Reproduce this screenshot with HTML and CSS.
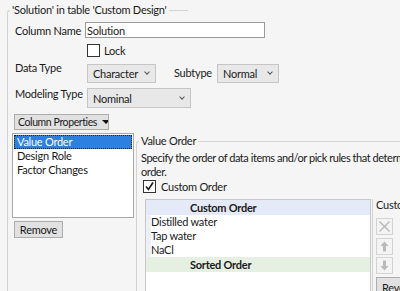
FILE: index.html
```html
<!DOCTYPE html>
<html lang="en">
<head>
    <title>Column Info</title>
    <link rel="stylesheet" href="styles.css">
</head>
<body>
    <fieldset class="group">
        <legend>'Solution' in table 'Custom Design'</legend>
        <div class="row name-row">
            <span class="label">Column Name</span>
            <input class="text-input" type="text" value="Solution">
        </div>
        <div class="row lock-row">
            <span class="check"></span>
            <span>Lock</span>
        </div>
        <div class="row type-row">
            <span class="label">Data Type</span>
            <div class="combo combo-char">Character<span class="chev"></span></div>
            <span class="sub-label">Subtype</span>
            <div class="combo combo-normal">Normal<span class="chev"></span></div>
        </div>
        <div class="row model-row">
            <span class="label">Modeling Type</span>
            <div class="combo combo-nominal">Nominal<span class="chev"></span></div>
        </div>
        <button class="btn props-btn"><span class="props-text">Column Properties</span><span class="tri"></span></button>
        <div class="split">
            <div class="left-panel">
                <ul class="prop-list">
                    <li class="selected">Value Order</li>
                    <li>Design Role</li>
                    <li>Factor Changes</li>
                </ul>
                <button class="btn remove-btn">Remove</button>
            </div>
            <fieldset class="value-group">
                <legend>Value Order</legend>
                <p class="desc">Specify the order of data items and/or pick rules that determine the<br>order.</p>
                <div class="check-row">
                    <span class="check checked">
                        <svg width="11" height="11" viewBox="0 0 11 11"><path d="M2 5.5 L4.5 8.5 L9 1.5" fill="none" stroke="#1a1a1a" stroke-width="1.6"/></svg>
                    </span>
                    <span>Custom Order</span>
                </div>
                <div class="order-area">
                    <div class="order-list">
                        <div class="order-head">Custom Order</div>
                        <div class="order-item">Distilled water</div>
                        <div class="order-item">Tap water</div>
                        <div class="order-item">NaCl</div>
                        <div class="order-head sorted">Sorted Order</div>
                    </div>
                    <div class="order-tools">
                        <div class="tools-label">Custom Order</div>
                        <button class="tool tool-x" disabled>
                            <svg width="13" height="13" viewBox="0 0 13 13"><path d="M1.5 1.5 L11.5 11.5 M11.5 1.5 L1.5 11.5" stroke="#b5b5b5" stroke-width="1.3"/></svg>
                        </button>
                        <button class="tool tool-up" disabled>
                            <svg width="9" height="11" viewBox="0 0 9 11"><path d="M4.5 0.5 L8.5 5 L6 5 L6 10.5 L3 10.5 L3 5 L0.5 5 Z" fill="#b9b9b9"/></svg>
                        </button>
                        <button class="tool tool-down" disabled>
                            <svg width="9" height="11" viewBox="0 0 9 11"><path d="M4.5 10.5 L8.5 6 L6 6 L6 0.5 L3 0.5 L3 6 L0.5 6 Z" fill="#b9b9b9"/></svg>
                        </button>
                        <button class="btn rev-btn">Reverse</button>
                    </div>
                </div>
            </fieldset>
        </div>
    </fieldset>
</body>
</html>
```
FILE: styles.css
```css
body {
    margin: 0;
    background-color: #f5f5f5;
    font-family: Lato, "Liberation Sans", sans-serif;
    font-size: 11px;
    letter-spacing: -0.25px;
    color: #1a1a1a;
    white-space: nowrap;
    overflow: hidden;
}

fieldset {
    border: 1px solid #d3d3d3;
    border-right: none;
    border-bottom: none;
    border-radius: 3px 0 0 0;
}

legend {
    line-height: 16px;
    padding: 0 2px;
}

.group {
    margin: 2px 0 0 7px;
    padding: 4px 0 0 7px;
    width: 173px;
    min-width: 0;
    height: 300px;
}

.group > legend {
    margin-left: -5px;
}

.row {
    display: flex;
    width: 380px;
}

.label {
    width: 70px;
    flex-shrink: 0;
}

.name-row {
    height: 16px;
    align-items: center;
}

.text-input {
    width: 180px;
    height: 16px;
    box-sizing: border-box;
    border: 1px solid #9a9a9a;
    background: #fff;
    font: inherit;
    letter-spacing: inherit;
    padding: 0 1px;
    margin: 0;
    color: #1a1a1a;
}

.lock-row {
    margin-top: 6px;
    padding-left: 72px;
    align-items: center;
    height: 13px;
}

.check {
    width: 13px;
    height: 13px;
    box-sizing: border-box;
    border: 1px solid #333;
    background: #fff;
    margin-right: 4px;
    display: flex;
    align-items: center;
    justify-content: center;
    flex-shrink: 0;
}

.type-row {
    margin-top: 4px;
}

.combo {
    height: 19px;
    box-sizing: border-box;
    border: 1px solid #c6c6c6;
    background: #e8e8e8;
    display: flex;
    align-items: center;
    justify-content: space-between;
    padding: 0 6px 0 5px;
    flex-shrink: 0;
}

.chev {
    width: 3px;
    height: 3px;
    border-right: 1px solid #555;
    border-bottom: 1px solid #555;
    transform: rotate(45deg);
    margin-top: -3px;
}

.type-row .label {
    line-height: 14px;
}

.type-row .combo {
    margin-top: 3px;
}

.combo-char {
    margin-left: 2px;
    width: 69px;
}

.sub-label {
    margin: 5px 0 0 18px;
    width: 43px;
}

.combo-normal {
    width: 62px;
}

.model-row {
    margin-top: 5px;
}

.model-row .label {
    line-height: 14px;
    margin-top: -1px;
}

.combo-nominal {
    margin-left: 2px;
    width: 104px;
    height: 20px;
}

.btn {
    font: inherit;
    letter-spacing: inherit;
    color: #1a1a1a;
    background: #e1e1e1;
    border: 1px solid #adadad;
    padding: 0;
    margin: 0;
    box-sizing: border-box;
}

.props-btn {
    display: flex;
    align-items: center;
    margin: 6px 0 0 -1px;
    width: 95px;
    height: 16px;
    padding: 0 2px 0 3px;
    overflow: hidden;
}

.props-text {
    font-size: 10.5px;
    letter-spacing: -0.4px;
}

.tri {
    width: 0;
    height: 0;
    border-left: 4px solid transparent;
    border-right: 4px solid transparent;
    border-top: 4px solid #111;
    flex-shrink: 0;
    margin-left: 5px;
}

.split {
    display: flex;
    margin: 3px 0 0 -3px;
    width: 393px;
}

.left-panel {
    width: 122px;
    flex-shrink: 0;
}

.prop-list {
    list-style: none;
    margin: 0;
    padding: 1px;
    height: 85px;
    box-sizing: border-box;
    border: 1px solid #a8a8a8;
    background: #fff;
}

.prop-list li {
    line-height: 14px;
    padding-left: 3px;
}

.prop-list .selected {
    background: #2e80e0;
    color: #fff;
    outline: 1px dotted #222;
    outline-offset: -1px;
}

.remove-btn {
    margin: 3px 0 0 2px;
    width: 49px;
    height: 17px;
}

.value-group {
    margin: 0 0 0 2px;
    padding: 2px 0 0 4px;
    flex: 1;
    min-width: 0;
    height: 200px;
}

.value-group > legend {
    margin-left: -2px;
}

.desc {
    margin: 0;
    line-height: 14px;
    letter-spacing: -0.45px;
}

.check-row {
    display: flex;
    align-items: center;
    height: 14px;
    padding-left: 2px;
}

.check.checked {
    margin-right: 5px;
}

.order-area {
    display: flex;
    margin: 6px 0 0 4px;
}

.order-list {
    width: 226px;
    height: 100px;
    box-sizing: border-box;
    border: 1px solid #c8c8c8;
    background: #fff;
    flex-shrink: 0;
}

.order-head {
    background: #e4eaf7;
    font-weight: bold;
    line-height: 15px;
    padding-left: 44px;
}

.order-head.sorted {
    background: #e5efe2;
}

.order-item {
    line-height: 14px;
    border-left: 5px solid #ebf0f9;
}

.order-tools {
    margin-left: 1px;
    border-left: 1px solid #d3d3d3;
    padding-left: 3px;
    display: flex;
    flex-direction: column;
}

.tools-label {
    line-height: 14px;
    margin-top: -1px;
}

.tool {
    width: 17px;
    height: 17px;
    padding: 0;
    background: #f4f4f4;
    border: 1px solid #d3d3d3;
    display: flex;
    align-items: center;
    justify-content: center;
}

.tool-x {
    margin-top: 6px;
}

.tool-up {
    margin-top: 3px;
}

.tool-down {
    margin-top: 2px;
}

.rev-btn {
    margin-top: 3px;
    width: 60px;
    height: 20px;
    text-align: left;
    padding-left: 5px;
}
```
